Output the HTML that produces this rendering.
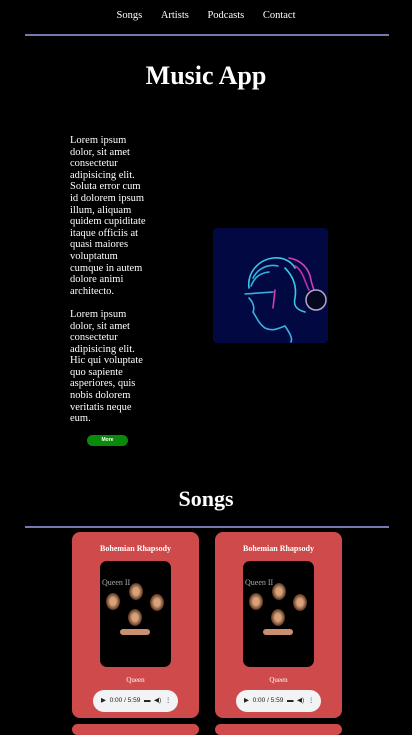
<!DOCTYPE html>
<html style="width:412px;height:735px;overflow:hidden"><head><meta charset="utf-8"><style>
*{margin:0;padding:0;box-sizing:border-box}
body{width:412px;height:735px;background:#000;color:#fff;font-family:"Liberation Serif",serif;position:relative;overflow:hidden}
.a{position:absolute}
.nav{top:10px;left:0;width:412px;text-align:center;font-size:10.5px}
.nav span{margin:0 8px}
.hr{height:2px;background:#7479b3;left:25px;width:364px}
h1{position:absolute;width:412px;text-align:center;font-size:26px;font-weight:bold}
.txt{left:70px;width:80px;font-size:10.5px;line-height:11.6px}
.btn{left:87px;top:435px;width:41px;height:11px;background:#0a8a0a;border-radius:6px;font-family:"Liberation Sans",sans-serif;font-size:5px;font-weight:bold;text-align:center;line-height:11px}
.card{width:127px;height:186px;background:#cf4a4a;border-radius:8px;top:532px}
.card .t{position:absolute;top:12px;width:100%;text-align:center;font-size:8px;font-weight:bold}
.card .img{position:absolute;left:28px;top:29px;width:71px;height:106px;background:#000;border-radius:7px;overflow:hidden}
.card .q{position:absolute;top:144px;width:100%;text-align:center;font-size:7px}
.card .au{position:absolute;left:21px;top:158px;width:85px;height:22px;background:#f1f3f4;border-radius:11px;color:#222;font-family:"Liberation Sans",sans-serif;font-size:6.5px;line-height:22px;padding-left:8px}
.face{position:absolute;width:14px;height:17px;border-radius:50%;background:radial-gradient(#d8a27a 30%,#5a3320 70%,transparent 75%)}
</style></head><body>
<div class="a nav"><span>Songs</span> <span>Artists</span> <span>Podcasts</span> <span>Contact</span></div>
<div class="a hr" style="top:34px"></div>
<h1 style="top:61px">Music App</h1>
<div class="a txt" style="top:135px">Lorem ipsum dolor, sit amet consectetur adipisicing elit. Soluta error cum id dolorem ipsum illum, aliquam quidem cupiditate itaque officiis at quasi maiores voluptatum cumque in autem dolore animi architecto.<br><br>Lorem ipsum dolor, sit amet consectetur adipisicing elit. Hic qui voluptate quo sapiente asperiores, quis nobis dolorem veritatis neque eum.</div>
<div class="a btn">More</div>
<svg class="a" style="left:213px;top:228px" width="115" height="115" viewBox="0 0 115 115">
<rect width="115" height="115" rx="4" fill="#020842"/>
<g fill="none" stroke-width="1.6" stroke-linecap="round">
<path d="M36 60 C34 45 45 32 60 30 C70 29 78 33 82 40" stroke="#3ac8e8"/>
<path d="M40 50 C45 40 55 36 65 38 M38 58 C42 48 48 45 56 44" stroke="#2bb6e0"/>
<path d="M76 30 C88 32 96 40 98 52 C100 62 104 66 102 72" stroke="#d43bb8"/>
<path d="M82 38 C90 42 92 55 96 62" stroke="#c030a8"/>
<path d="M72 40 C80 48 84 58 82 70 C80 78 84 82 92 84" stroke="#3ac8e8"/>
<path d="M32 66 L60 64 M36 70 C40 74 42 80 40 84 C44 90 46 96 52 100 C60 104 66 100 72 98 C76 104 80 110 78 114" stroke="#3ab0e0"/>
<path d="M62 62 L60 80" stroke="#d43bb8"/>
</g>
<circle cx="103" cy="72" r="10" fill="#050620" stroke="#b8a8c8" stroke-width="1.5"/>
</svg>
<h1 style="top:486px;font-size:22px">Songs</h1>
<div class="a hr" style="top:526px"></div>
<div class="a card" style="left:72px"><div class="t">Bohemian Rhapsody</div><div class="img"><div style="position:absolute;left:2px;top:17px;font-size:8px;color:#aaa">Queen II</div><div class="face" style="left:6px;top:32px"></div><div class="face" style="left:29px;top:22px"></div><div class="face" style="left:50px;top:33px"></div><div class="face" style="left:28px;top:48px"></div><div style="position:absolute;left:20px;top:68px;width:30px;height:6px;background:#c89070;border-radius:3px"></div></div><div class="q">Queen</div><div class="au">▶ &nbsp;0:00 / 5:59 &nbsp;▬ &nbsp;◀) &nbsp;⋮</div></div>
<div class="a card" style="left:215px"><div class="t">Bohemian Rhapsody</div><div class="img"><div style="position:absolute;left:2px;top:17px;font-size:8px;color:#aaa">Queen II</div><div class="face" style="left:6px;top:32px"></div><div class="face" style="left:29px;top:22px"></div><div class="face" style="left:50px;top:33px"></div><div class="face" style="left:28px;top:48px"></div><div style="position:absolute;left:20px;top:68px;width:30px;height:6px;background:#c89070;border-radius:3px"></div></div><div class="q">Queen</div><div class="au">▶ &nbsp;0:00 / 5:59 &nbsp;▬ &nbsp;◀) &nbsp;⋮</div></div>
<div class="a card" style="left:72px;top:724px;height:11px"></div>
<div class="a card" style="left:215px;top:724px;height:11px"></div>
</body></html>
